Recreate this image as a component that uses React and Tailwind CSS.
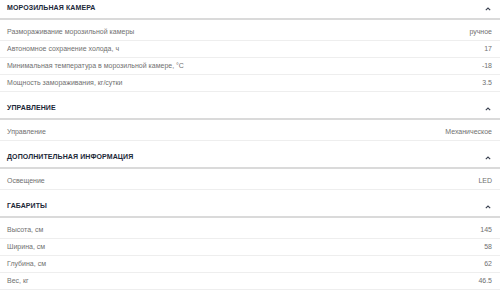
import React from "react";

const sections = [
  {
    title: "Морозильная камера",
    rows: [
      ["Размораживание морозильной камеры", "ручное"],
      ["Автономное сохранение холода, ч", "17"],
      ["Минимальная температура в морозильной камере, °С", "-18"],
      ["Мощность замораживания, кг/сутки", "3.5"],
    ],
  },
  {
    title: "Управление",
    rows: [["Управление", "Механическое"]],
  },
  {
    title: "Дополнительная информация",
    rows: [["Освещение", "LED"]],
  },
  {
    title: "Габариты",
    rows: [
      ["Высота, см", "145"],
      ["Ширина, см", "58"],
      ["Глубина, см", "62"],
      ["Вес, кг", "46.5"],
    ],
  },
];

const Chevron = () => (
  <svg width="6" height="4" viewBox="0 0 6 4" className="mr-[2px]">
    <path d="M0.8 3.2 L3 1 L5.2 3.2" fill="none" stroke="#3a4150" strokeWidth="1.1" />
  </svg>
);

const Section = ({ title, rows, first }) => (
  <div className={first ? "" : "mt-[8px]"}>
    {/* Header */}
    <div className="flex items-center justify-between h-[20px] pl-[7px] pr-[7px] pb-[1px] border-b-2 border-[#dadada]">
      <span className="uppercase font-bold text-[7px] text-[#1c2838] tracking-[0.1px]">
        {title}
      </span>
      <Chevron />
    </div>
    {/* Rows */}
    <div className="pt-[4px]">
      {rows.map(([label, value]) => (
        <div
          key={label}
          className="flex items-center justify-between h-[17px] pl-[7px] pr-[8px] border-b border-[#eeeeee] text-[7px] text-[#707070]"
        >
          <span>{label}</span>
          <span>{value}</span>
        </div>
      ))}
    </div>
  </div>
);

const App = () => {
  return (
    <div
      className="w-[500px] h-[290px] bg-white overflow-hidden"
      style={{ fontFamily: '"Liberation Sans", Arial, sans-serif' }}
    >
      {sections.map((s, i) => (
        <Section key={s.title} title={s.title} rows={s.rows} first={i === 0} />
      ))}
    </div>
  );
};

export default App;
